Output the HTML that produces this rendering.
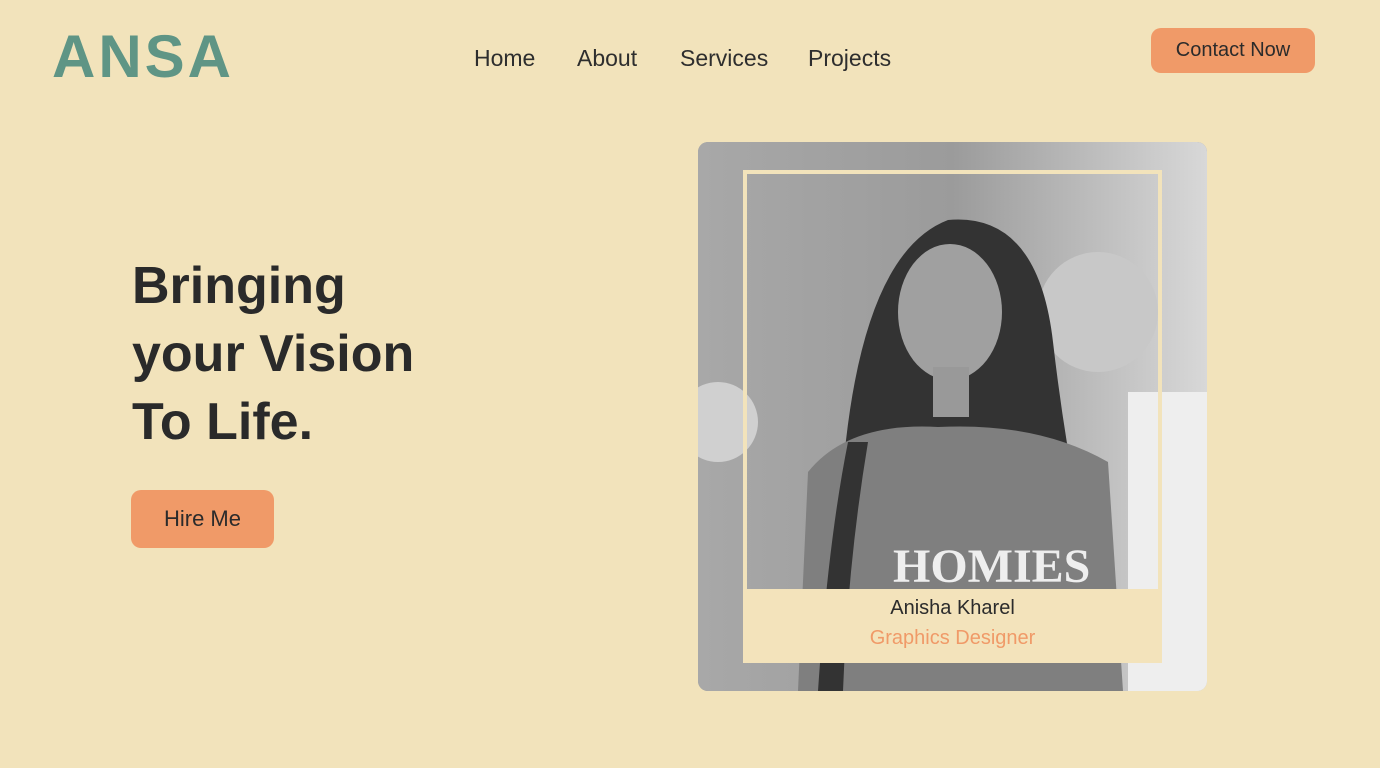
<!DOCTYPE html>
<html><head><style>
body{margin:0;width:1380px;height:768px;background:#f2e3bb;font-family:"Liberation Sans",sans-serif;position:relative;overflow:hidden;color:#2b2b2b}
.logo{position:absolute;left:52px;top:22px;font-size:60px;font-weight:bold;color:#5f9585;letter-spacing:3px}
.nav{position:absolute;top:45px;font-size:23px;color:#2e2e2e}
.btn{position:absolute;background:#f09a68;border-radius:10px;color:#2b2b2b;display:flex;align-items:center;justify-content:center}
h1{position:absolute;left:132px;top:252px;margin:0;font-size:52px;line-height:68px;font-weight:bold;color:#2a2a2a}
.card{position:absolute;left:698px;top:142px;width:509px;height:549px;border-radius:10px;overflow:hidden;background:#9a9a9a}
.cap{position:absolute;left:743px;top:589px;width:419px;height:74px;background:#f3e3bb;text-align:center}
</style></head><body>
<div class="logo">ANSA</div>
<div class="nav" style="left:474px">Home</div>
<div class="nav" style="left:577px">About</div>
<div class="nav" style="left:680px">Services</div>
<div class="nav" style="left:808px">Projects</div>
<div class="btn" style="left:1151px;top:28px;width:164px;height:45px;font-size:20px">Contact Now</div>
<h1>Bringing<br>your Vision<br>To Life.</h1>
<div class="btn" style="left:131px;top:490px;width:143px;height:58px;font-size:22px">Hire Me</div>
<div class="card">
<svg width="509" height="549" viewBox="0 0 509 549">
<defs><linearGradient id="bg" x1="0" x2="1"><stop offset="0" stop-color="#a8a8a8"/><stop offset=".5" stop-color="#9b9b9b"/><stop offset="1" stop-color="#d8d8d8"/></linearGradient></defs>
<rect width="509" height="549" fill="url(#bg)"/>
<rect x="430" y="250" width="79" height="299" fill="#eeeeee"/>
<circle cx="400" cy="170" r="60" fill="#c8c8c8"/>
<circle cx="20" cy="280" r="40" fill="#d0d0d0"/>
<path d="M140 460 Q140 120 250 78 Q340 70 355 200 Q370 330 400 460 Z" fill="#333"/>
<ellipse cx="252" cy="170" rx="52" ry="68" fill="#a0a0a0"/>
<rect x="235" y="225" width="36" height="50" fill="#999"/>
<path d="M100 549 L110 330 Q150 280 240 285 Q340 280 410 320 L425 549 Z" fill="#7f7f7f"/>
<path d="M120 549 Q130 400 150 300 L170 300 Q150 420 145 549Z" fill="#333"/>
<text x="195" y="440" font-family="Liberation Serif" font-size="48" font-weight="bold" fill="#eee">HOMIES</text>
<text x="230" y="465" font-size="16" fill="#eee">FASHION WEAR</text>
<rect x="47" y="30" width="415" height="489" fill="none" stroke="#f2e3bb" stroke-width="4"/>
</svg>
</div>
<div class="cap"><div style="font-size:20px;margin-top:8px;color:#2b2b2b">Anisha Kharel</div><div style="font-size:20px;margin-top:7px;color:#f09a68">Graphics Designer</div></div>
</body></html>
